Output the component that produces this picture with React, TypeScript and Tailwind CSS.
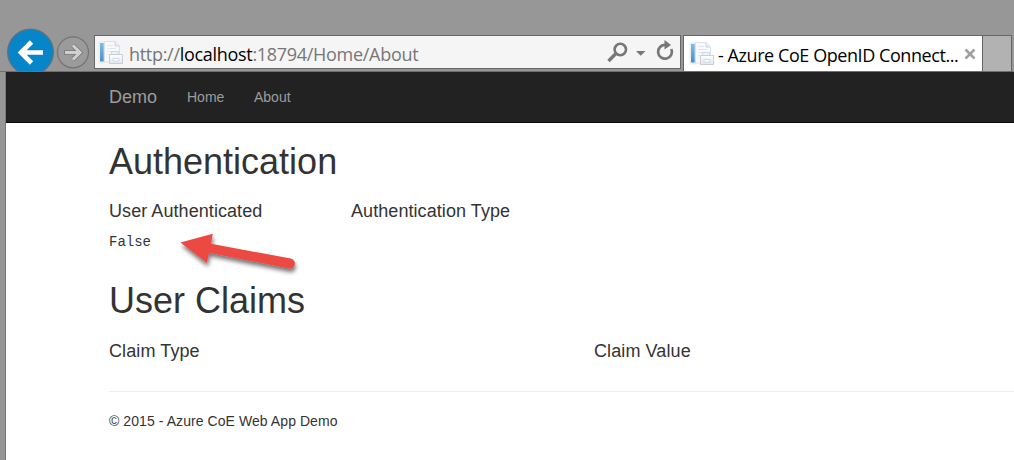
function PageIcon() {
  return (
    <svg width="25" height="25" viewBox="0 0 25 25" className="shrink-0">
      <defs>
        <linearGradient id="spine" x1="0" y1="0" x2="0" y2="1">
          <stop offset="0" stopColor="#7dbde6" />
          <stop offset="1" stopColor="#4a8ec6" />
        </linearGradient>
        <linearGradient id="card" x1="0" y1="0" x2="0" y2="1">
          <stop offset="0" stopColor="#fff" />
          <stop offset="1" stopColor="#e2e7ef" />
        </linearGradient>
      </defs>
      <path d="M1 2h6v21H1z" fill="#f1f4f7" stroke="#dde2e7" strokeWidth=".6" />
      <path d="M2 3h3.700v18.500H2z" fill="url(#spine)" />
      <path d="M6.500 1.500H17l4.500 4.500v16H6.500z" fill="#f7f9fc" stroke="#d3dae3" strokeWidth=".8" />
      <path d="M17 1.500v4.500h4.500" fill="#e7edf4" stroke="#c5ced9" strokeWidth=".8" />
      <path d="M9.500 5.500h5M9.500 8.500h8M9.500 11.500h5M9.500 14.500h2" stroke="#dde4ed" />
      <path d="M13.500 11.500h7v3h-7z" fill="#eef2f6" stroke="#c8d1dc" strokeWidth=".8" />
      <path d="M11.500 14.500h13v9h-13z" fill="url(#card)" stroke="#c2cad6" strokeWidth=".9" />
      <path d="M15 18.500h6v2.500h-6z" fill="#fff" stroke="#c4cdd8" strokeWidth=".7" />
    </svg>
  );
}

function BrowserBar() {
  return (
    <div className="flex h-[72px] items-start overflow-hidden border-b border-[#6f6f6f] bg-[#979797] pt-[35px] font-['Open_Sans','Noto_Sans',sans-serif]">
      <svg width="94" height="48" viewBox="0 0 94 48" className="-mt-[8px] shrink-0">
        <circle cx="30.500" cy="25" r="22.900" fill="#0785c9" stroke="#65717a" strokeWidth="1.200" />
        <path d="M43 25.500H22M31.500 15L21 25.500L31.500 36" fill="none" stroke="#fff" strokeWidth="4.700" />
        <circle cx="73" cy="25.300" r="15.500" fill="#9b9b9b" stroke="#737373" strokeWidth="1.200" />
        <path d="M64 25.500H79M73 18.500L80 25.500L73 32.500" fill="none" stroke="#7b7b7b" strokeWidth="4.600" />
        <path d="M65 25.500H79M73 18.500L80 25.500L73 32.500" fill="none" stroke="#d0d0d0" strokeWidth="3" />
      </svg>
      <div className="flex h-[34px] w-[587px] shrink-0 items-center border border-[#666] bg-[#f5f5f5] pl-[3px]">
        <PageIcon />
        <div className="ml-[6px] w-[290px] whitespace-nowrap pt-[3px] text-[18px] leading-none tracking-[-0.3px] text-[#777]">
          http://<span className="text-black">localhost</span>:18794/Home/About
        </div>
        <svg width="76" height="30" viewBox="0 0 76 30" className="ml-auto mr-[2px]">
          <circle cx="18.300" cy="12.500" r="5.700" fill="none" stroke="#777" strokeWidth="2.600" />
          <path d="M14 16.500L6.500 24" stroke="#777" strokeWidth="3.300" />
          <path d="M34 14h9.500l-4.750 4.750z" fill="#777" />
          <path d="M63.500 7.900A6.900 6.900 0 1 0 69.300 12" fill="none" stroke="#777" strokeWidth="2.700" />
          <path d="M62.500 3L69 8L62.500 12.500z" fill="#777" />
        </svg>
      </div>
      <div className="ml-[2px] flex h-[37px] w-[300px] shrink-0 items-start border border-[#666] bg-white pl-[5px]">
        <div className="mt-[5px] flex"><PageIcon /></div>
        <div className="ml-[4px] mt-[10px] w-[241px] whitespace-nowrap text-[18px] leading-none tracking-[-0.43px] text-black">
          - Azure CoE OpenID Connect...
        </div>
        <svg width="12" height="12" viewBox="0 0 12 12" className="ml-[5px] mt-[12px] shrink-0">
          <path d="M1.500 1.500l9 9M10.500 1.500l-9 9" stroke="#a0a0a0" strokeWidth="2.600" />
        </svg>
      </div>
      <div className="h-[37px] w-[29px] shrink-0 border-y border-r border-[#666] bg-[#b2b2b2]" />
    </div>
  );
}

function Arrow() {
  return (
    <svg width="140" height="55" viewBox="0 0 140 55" className="absolute left-[164px] top-[153px]">
      <defs>
        <filter id="shadow" x="-20%" y="-30%" width="140%" height="180%">
          <feDropShadow dx="1" dy="3.500" stdDeviation="2.200" floodColor="#000" floodOpacity=".55" />
        </filter>
      </defs>
      <path
        d="M10.500 17.500L42.800 8.700L41 18.800L120.700 33.600A5 5 0 0 1 119 43.500L39 27.800L37 38z"
        fill="#eb4a43"
        filter="url(#shadow)"
      />
    </svg>
  );
}

export default function App() {
  return (
    <div className="h-[460px] w-[1014px] overflow-hidden bg-[#979797] font-['Liberation_Sans',Arial,sans-serif] text-[#333]">
      <BrowserBar />
      <div className="relative ml-[5px] h-[388px] border-l border-[#777] bg-white">
        <nav className="flex h-[51px] items-center border-b border-[#080808] bg-[#222] pl-[103px] text-[14px] text-[#9d9d9d]">
          <span className="w-[78px] text-[18px]">Demo</span>
          <span className="w-[67px]">Home</span>
          <span>About</span>
        </nav>
        <main className="pl-[103px]">
          <h1 className="pt-[19px] text-[36px] leading-[40px]">Authentication</h1>
          <div className="mt-[19px] flex text-[18px] leading-[20px] tracking-[0.07px]">
            <h2 className="w-[242px]">User Authenticated</h2>
            <h2>Authentication Type</h2>
          </div>
          <div className="mt-[11px] font-['Liberation_Mono','Courier_New',monospace] text-[14px] leading-[20px]">False</div>
          <h1 className="mt-[29px] text-[36px] leading-[40px]">User Claims</h1>
          <div className="mt-[20px] flex text-[18px] leading-[20px] tracking-[0.1px]">
            <h2 className="w-[485px]">Claim Type</h2>
            <h2>Claim Value</h2>
          </div>
          <footer className="mt-[30px] border-t border-[#eee] pt-[19px] text-[14px] leading-[20px] tracking-[0.07px]">
            © 2015 - Azure CoE Web App Demo
          </footer>
        </main>
        <Arrow />
      </div>
    </div>
  );
}
